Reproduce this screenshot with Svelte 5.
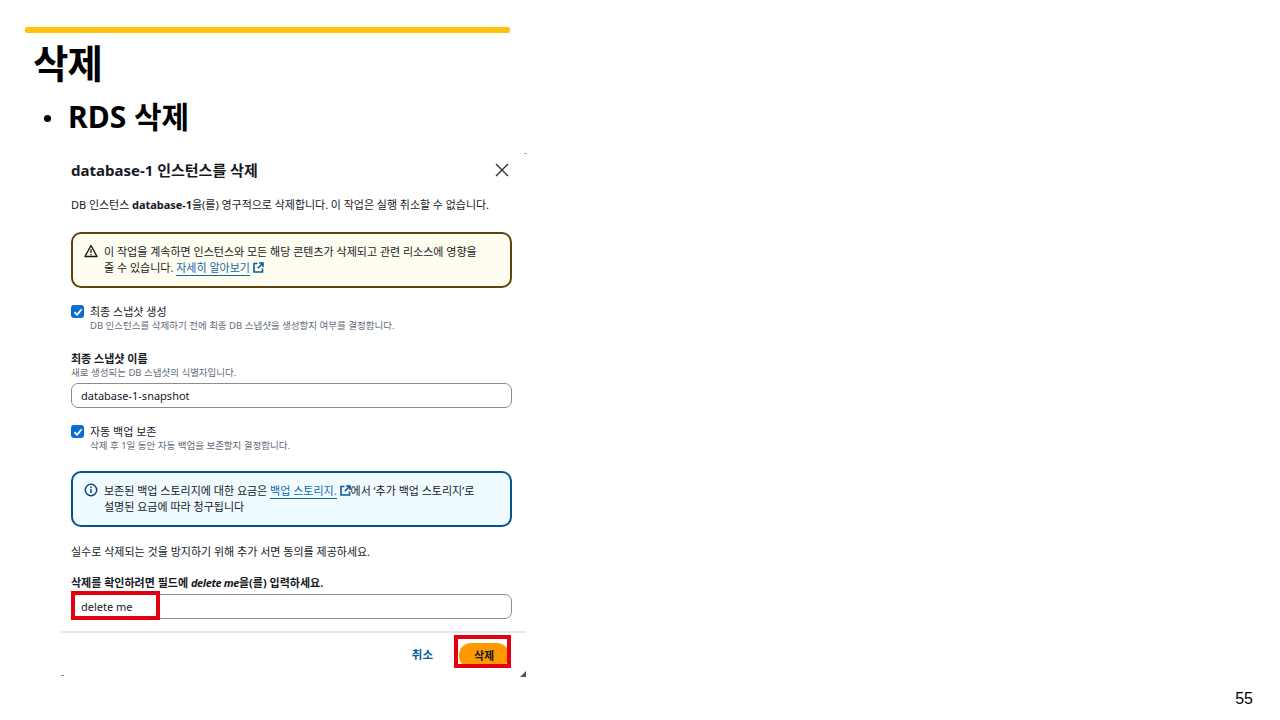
<script>
    const checks = [
        { label: "최종 스냅샷 생성", hint: "DB 인스턴스를 삭제하기 전에 최종 DB 스냅샷을 생성할지 여부를 결정합니다." },
        { label: "자동 백업 보존", hint: "삭제 후 1일 동안 자동 백업을 보존할지 결정합니다." },
    ];
</script>

{#snippet check(item)}
    <div class="check">
        <span class="box">
            <svg width="10" height="10" viewBox="0 0 10 10"><path d="M1.5 5.2 4 7.8 8.6 2.2" fill="none" stroke="#fff" stroke-width="1.8" /></svg>
        </span>
        <div>
            <div class="check-label">{item.label}</div>
            <div class="hint">{item.hint}</div>
        </div>
    </div>
{/snippet}

{#snippet external()}
    <svg class="ext" width="11" height="11" viewBox="0 0 11 11">
        <path d="M4.5 1.5H1v8.5h8.5V6.5M6 1h4v4M10 1 4.8 6.2" fill="none" stroke="#0a5a9c" stroke-width="1.6" />
    </svg>
{/snippet}

<div class="slide">
    <div class="column">
        <div class="bar"></div>
        <h1>삭제</h1>
        <div class="bullet"><span class="dot"></span>RDS 삭제</div>

        <div class="dialog">
            <div class="body">
                <div class="head">
                    <h2>database-1 인스턴스를 삭제</h2>
                    <svg width="16" height="16" viewBox="0 0 16 16"><path d="M2 2 14 14M14 2 2 14" stroke="#2a2e33" stroke-width="1.3" /></svg>
                </div>
                <p class="lead">DB 인스턴스 <b>database-1</b>을(를) 영구적으로 삭제합니다. 이 작업은 실행 취소할 수 없습니다.</p>

                <div class="alert warn">
                    <svg class="alert-icon" width="14" height="14" viewBox="0 0 14 14">
                        <path d="M7 1.5 13 12.5H1Z" fill="none" stroke="#1f1a10" stroke-width="1.4" stroke-linejoin="round" />
                        <path d="M7 5.2V9M7 10v1.2" stroke="#1f1a10" stroke-width="1.3" />
                    </svg>
                    <div>이 작업을 계속하면 인스턴스와 모든 해당 콘텐츠가 삭제되고 관련 리소스에 영향을 줄 수 있습니다. <a href="#top">자세히 알아보기</a> {@render external()}</div>
                </div>

                {@render check(checks[0])}

                <div class="field-label">최종 스냅샷 이름</div>
                <div class="hint">새로 생성되는 DB 스냅샷의 식별자입니다.</div>
                <div class="input">database-1-snapshot</div>

                {@render check(checks[1])}

                <div class="alert info">
                    <svg class="alert-icon" width="14" height="14" viewBox="0 0 14 14">
                        <circle cx="7" cy="7" r="5.7" fill="none" stroke="#0a4a80" stroke-width="1.5" />
                        <path d="M7 6v4M7 3.6v1.4" stroke="#0a4a80" stroke-width="1.5" />
                    </svg>
                    <div>보존된 백업 스토리지에 대한 요금은 <a href="#top">백업 스토리지.</a> {@render external()}에서 ‘추가 백업 스토리지’로 설명된 요금에 따라 청구됩니다</div>
                </div>

                <p class="consent">실수로 삭제되는 것을 방지하기 위해 추가 서면 동의를 제공하세요.</p>
                <div class="field-label confirm">삭제를 확인하려면 필드에 <i>delete me</i>을(를) 입력하세요.</div>
                <div class="input typed">delete me<span class="mark mark-input"></span></div>
            </div>

            <div class="foot">
                <span class="cancel">취소</span>
                <span class="delete">삭제<span class="mark mark-button"></span></span>
            </div>
        </div>
    </div>
    <div class="page-no">55</div>
</div>

<style>
    :global(body) {
        background: #fff;
    }

    .slide {
        position: relative;
        width: 1280px;
        height: 720px;
        overflow: hidden;
        background: #fff;
        color: #000;
        font-family: "Noto Sans", "Noto Sans CJK KR", sans-serif;
    }

    .column {
        width: 526px;
        padding: 27px 0 0 25px;
        box-sizing: border-box;
    }

    .bar {
        width: 485px;
        height: 6px;
        background: #ffc20e;
        border-radius: 2px;
    }

    h1 {
        margin: 5px 0 0 8px;
        font-size: 38.5px;
        line-height: 50px;
        font-weight: 700;
        letter-spacing: -1px;
    }

    .bullet {
        display: flex;
        align-items: center;
        margin: 5px 0 0 19px;
        height: 44px;
        font-size: 30px;
        font-weight: 700;
    }

    .dot {
        width: 7px;
        height: 7px;
        margin: 6px 17px 0 0;
        border-radius: 50%;
        background: #000;
    }

    .dialog {
        position: relative;
        margin: 16px 0 0 36px;
        width: 465px;
        height: 524px;
        display: flex;
        flex-direction: column;
        font-size: 11px;
        line-height: 16px;
        color: #16191f;
    }

    /* scraps of the cropped modal's corners */
    .dialog::before {
        content: "";
        position: absolute;
        left: 0;
        bottom: 1px;
        width: 3px;
        height: 1px;
        background: #888;
        box-shadow: 463px -522px 0 #aaa;
    }

    .dialog::after {
        content: "";
        position: absolute;
        right: 0;
        bottom: 0;
        width: 6px;
        height: 6px;
        background: #555;
        clip-path: polygon(100% 0, 100% 100%, 0 100%);
    }

    .body {
        flex: 1;
        padding: 0 14px 0 10px;
    }

    .head {
        display: flex;
        justify-content: space-between;
        align-items: center;
        height: 34px;
        padding-right: 2px;
    }

    h2 {
        margin: 0;
        font-size: 15px;
        font-weight: 700;
    }

    .lead {
        margin: 10px 0 0;
        height: 16px;
        white-space: nowrap;
        letter-spacing: -0.04px;
    }

    .alert {
        display: flex;
        gap: 6px;
        margin-top: 19px;
        padding: 10px 24px 10px 11px;
        height: 56px;
        box-sizing: border-box;
        border: 2px solid;
        border-radius: 10px;
    }

    .alert-icon {
        flex: none;
    }

    .warn {
        border-color: #5c430f;
        background: #fffdf0;
    }

    .info {
        margin-top: 19px;
        border-color: #06528f;
        background: #f0fbff;
    }

    a {
        color: #0a6ab0;
        text-decoration: none;
        border-bottom: 1px solid #0a6ab0;
    }

    .ext {
        vertical-align: -1px;
    }

    .check {
        display: flex;
        gap: 6px;
        margin-top: 17px;
    }

    .box {
        flex: none;
        display: flex;
        align-items: center;
        justify-content: center;
        width: 13px;
        height: 13px;
        border-radius: 3px;
        background: #0a6cd0;
    }

    .check-label {
        font-size: 11px;
        line-height: 14px;
    }

    .hint {
        font-size: 9.5px;
        line-height: 13px;
        color: #5f6b7a;
    }

    .field-label {
        margin-top: 20px;
        font-size: 11px;
        line-height: 14px;
        font-weight: 700;
    }

    .input {
        position: relative;
        height: 25px;
        margin-top: 4px;
        padding-left: 9px;
        box-sizing: border-box;
        border: 1px solid #8c8c94;
        border-radius: 7px;
        line-height: 23px;
    }

    .consent {
        margin: 17px 0 0;
    }

    .field-label.confirm {
        margin-top: 16px;
    }

    .confirm i {
        letter-spacing: -0.4px;
    }

    .mark {
        position: absolute;
        box-sizing: border-box;
        border: 4px solid #e3000f;
    }

    .mark-input {
        left: -1px;
        top: -4px;
        width: 89px;
        height: 29px;
    }

    .foot {
        display: flex;
        justify-content: flex-end;
        align-items: center;
        gap: 26px;
        height: 46px;
        padding-right: 17px;
        border-top: 2px solid #e6e6e6;
        box-sizing: border-box;
        font-size: 11px;
        font-weight: 700;
    }

    .cancel {
        color: #0a5a9c;
        font-size: 11.5px;
    }

    .delete {
        position: relative;
        display: block;
        width: 50px;
        height: 25px;
        line-height: 25px;
        text-align: center;
        border-radius: 12px;
        background: #ff9900;
    }

    .mark-button {
        left: -5px;
        top: -8px;
        width: 57px;
        height: 33px;
    }

    .page-no {
        position: absolute;
        right: 27px;
        bottom: 12px;
        font-family: "Liberation Sans", sans-serif;
        font-size: 16px;
        line-height: 18px;
    }
</style>
